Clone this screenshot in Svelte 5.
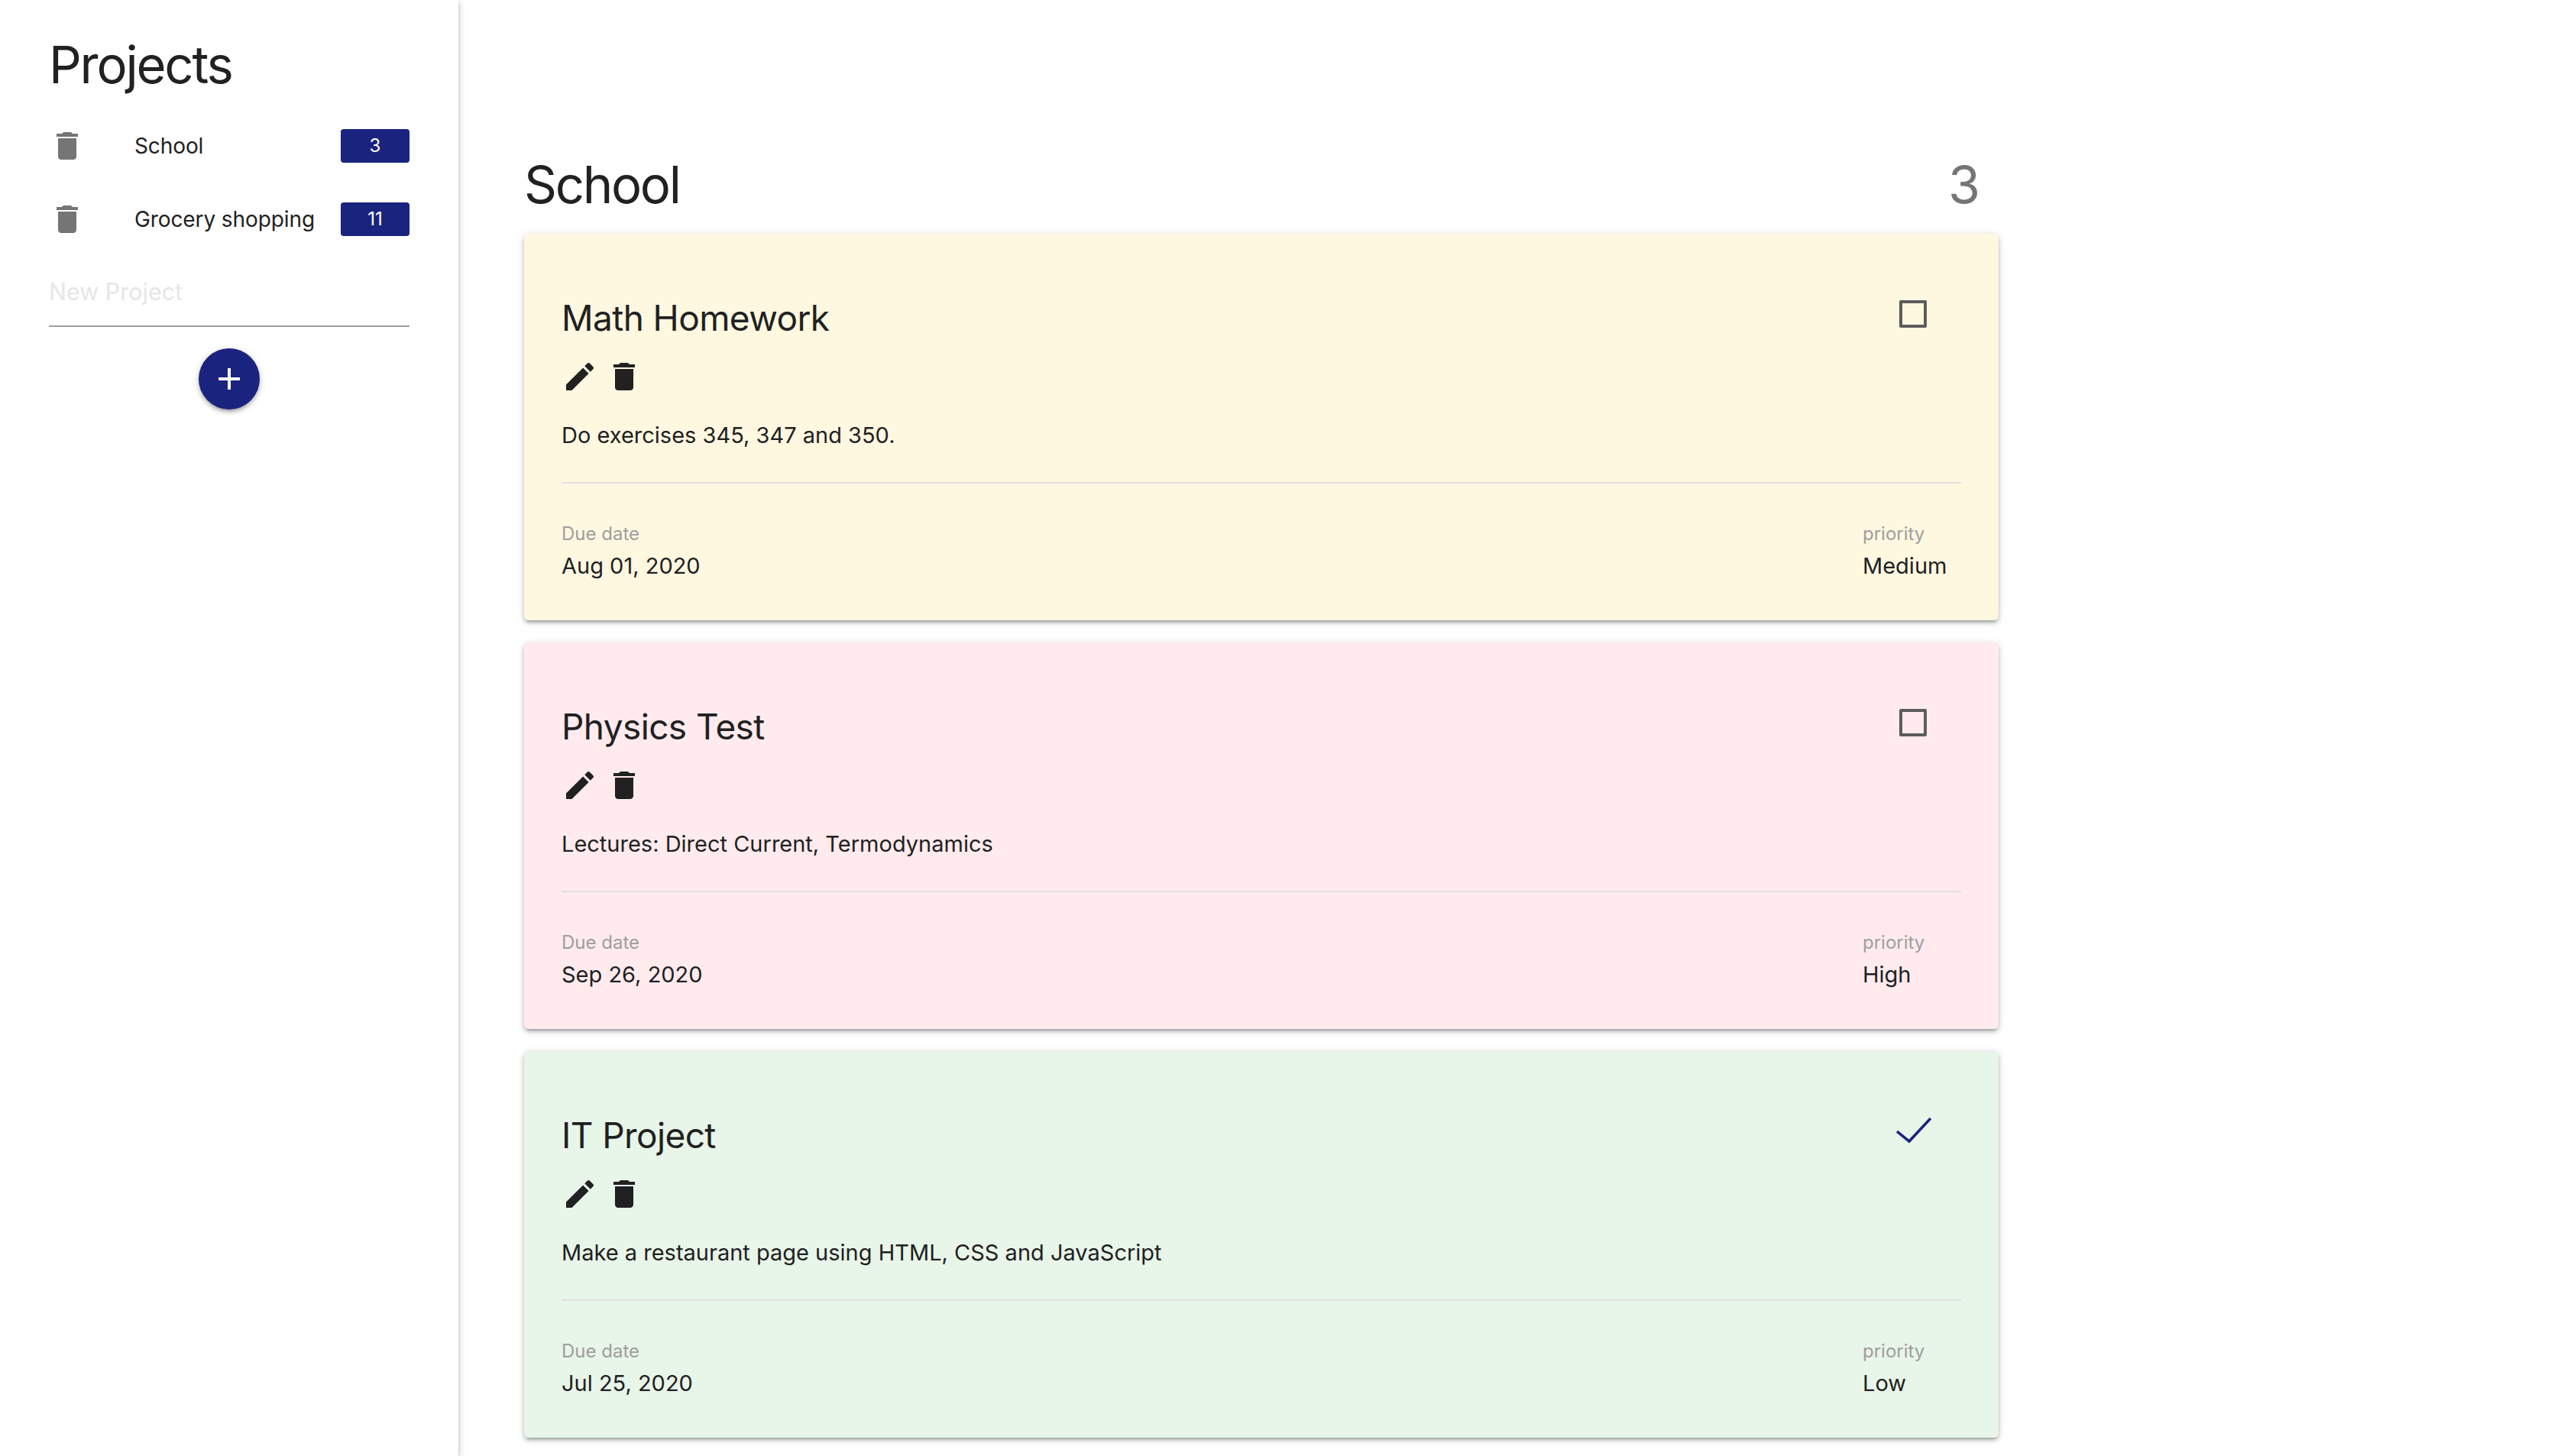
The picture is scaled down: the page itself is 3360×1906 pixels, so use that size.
<script>
	const projects = [
		{ name: 'School', count: 3 },
		{ name: 'Grocery shopping', count: 11 }
	];

	const todos = [
		{
			title: 'Math Homework',
			description: 'Do exercises 345, 347 and 350.',
			due: 'Aug 01, 2020',
			priority: 'Medium',
			done: false
		},
		{
			title: 'Physics Test',
			description: 'Lectures: Direct Current, Termodynamics',
			due: 'Sep 26, 2020',
			priority: 'High',
			done: false
		},
		{
			title: 'IT Project',
			description: 'Make a restaurant page using HTML, CSS and JavaScript',
			due: 'Jul 25, 2020',
			priority: 'Low',
			done: true
		}
	];

	const trash = 'M6 19c0 1.1.9 2 2 2h8c1.1 0 2-.9 2-2V7H6v12zM19 4h-3.5l-1-1h-5l-1 1H5v2h14V4z';
	const pencil =
		'M3 17.25V21h3.75L17.81 9.94l-3.75-3.75L3 17.25zM20.71 7.04c.39-.39.39-1.02 0-1.41l-2.34-2.34c-.39-.39-1.02-.39-1.41 0l-1.83 1.83 3.75 3.75 1.83-1.83z';
</script>

<div class="page">
	<aside class="sidebar">
		<h1>Projects</h1>
		{#each projects as project}
			<div class="project">
				<svg class="icon grey" viewBox="0 0 24 24"><path d={trash} /></svg>
				<span class="project-name">{project.name}</span>
				<span class="badge">{project.count}</span>
			</div>
		{/each}
		<div class="new-project">New Project</div>
		<button class="add" aria-label="Add project">
			<svg viewBox="0 0 24 24"><path d="M12 5v14M5 12h14" /></svg>
		</button>
	</aside>

	<main class="content">
		<header class="heading">
			<h2>School</h2>
			<span class="total">3</span>
		</header>

		{#each todos as todo}
			<article class="card {todo.priority.toLowerCase()}">
				<div class="card-top">
					<div>
						<h3>{todo.title}</h3>
						<div class="actions">
							<svg class="icon" viewBox="0 0 24 24"><path d={pencil} /></svg>
							<svg class="icon" viewBox="0 0 24 24"><path d={trash} /></svg>
						</div>
					</div>
					<div class="status">
						{#if todo.done}
							<svg class="check" viewBox="0 0 46 34"><path d="M1 18l16 13L45 1" /></svg>
						{:else}
							<span class="box"></span>
						{/if}
					</div>
				</div>
				<p>{todo.description}</p>
				<hr />
				<div class="card-bottom">
					<div>
						<div class="label">Due date</div>
						<div class="value">{todo.due}</div>
					</div>
					<div class="priority">
						<div class="label">priority</div>
						<div class="value">{todo.priority}</div>
					</div>
				</div>
			</article>
		{/each}
	</main>
</div>

<style>
	:global(body) {
		background: #fff;
		color: #212121;
		font-family: Inter, 'Noto Sans', sans-serif;
	}

	.page {
		display: flex;
		height: 1906px;
		overflow: hidden;
	}

	.sidebar {
		box-sizing: border-box;
		width: 600px;
		flex-shrink: 0;
		padding: 0 64px;
		box-shadow: 0 4px 4px rgba(0, 0, 0, 0.14), 0 6px 2px -4px rgba(0, 0, 0, 0.12), 0 2px 10px rgba(0, 0, 0, 0.2);
	}

	h1 {
		margin: 0;
		padding-top: 45px;
		height: 143px;
		box-sizing: border-box;
		font-size: 67px;
		line-height: 80px;
		font-weight: 400;
		letter-spacing: -2.2px;
	}

	.project {
		display: flex;
		align-items: center;
		height: 96px;
	}

	.icon {
		display: block;
		width: 48px;
		height: 48px;
		fill: #212121;
	}

	.icon.grey {
		fill: #757575;
	}

	.project-name {
		margin-left: 64px;
		flex: 1;
		font-size: 28px;
		letter-spacing: -0.1px;
	}

	.badge {
		width: 90px;
		height: 44px;
		border-radius: 4px;
		background: #1a237e;
		color: #fff;
		font-size: 24px;
		line-height: 44px;
		text-align: center;
	}

	.new-project {
		height: 92px;
		line-height: 92px;
		margin-top: 1px;
		box-sizing: border-box;
		border-bottom: 2px solid #9e9e9e;
		font-size: 30.5px;
		color: #e6e6e6;
	}

	.add {
		display: block;
		width: 80px;
		height: 80px;
		margin: 28px auto 0;
		padding: 16px;
		border: none;
		border-radius: 50%;
		background: #1a237e;
		box-shadow: 0 4px 4px rgba(0, 0, 0, 0.14), 0 6px 2px -4px rgba(0, 0, 0, 0.12), 0 2px 10px rgba(0, 0, 0, 0.2);
	}

	.add svg {
		display: block;
		fill: none;
		stroke: #fff;
		stroke-width: 2;
	}

	.content {
		width: 1930px;
		margin-left: 86px;
		padding-top: 188px;
	}

	.heading {
		display: flex;
		justify-content: space-between;
		align-items: center;
		height: 106px;
		margin-bottom: 12px;
		padding-right: 24px;
	}

	h2 {
		margin: 0;
		font-size: 67px;
		font-weight: 400;
		letter-spacing: -2.3px;
	}

	.total {
		font-size: 68px;
		color: #757575;
	}

	.card {
		box-sizing: border-box;
		height: 506px;
		margin-bottom: 29px;
		padding: 80px 49px 0;
		border-radius: 6px;
		box-shadow: 0 4px 4px rgba(0, 0, 0, 0.14), 0 6px 2px -4px rgba(0, 0, 0, 0.12), 0 2px 10px rgba(0, 0, 0, 0.2);
	}

	.medium {
		background: #fff8e1;
	}

	.high {
		background: #ffebee;
	}

	.low {
		background: #e8f5e9;
	}

	.card-top {
		display: flex;
		justify-content: space-between;
	}

	h3 {
		margin: 0;
		font-size: 46px;
		line-height: 60px;
		font-weight: 400;
		letter-spacing: -0.6px;
	}

	.actions {
		display: flex;
		gap: 10px;
		margin-top: 23px;
	}

	.status {
		width: 81px;
		padding-top: 7px;
	}

	.box {
		display: block;
		box-sizing: border-box;
		width: 36px;
		height: 36px;
		border: 4px solid #5c5c5c;
		border-radius: 2px;
	}

	.check {
		display: block;
		width: 46px;
		height: 34px;
		margin: 0 0 0 -4px;
		fill: none;
		stroke: #1a237e;
		stroke-width: 3.5;
	}

	p {
		margin: 31px 0 0;
		font-size: 29px;
		line-height: 44px;
	}

	hr {
		margin: 39px 0 0;
		border: none;
		border-top: 2px solid #e0e0e0;
	}

	.card-bottom {
		display: flex;
		justify-content: space-between;
		margin-top: 50px;
	}

	.priority {
		width: 129px;
	}

	.label {
		font-size: 24px;
		line-height: 32px;
		color: #9e9e9e;
	}

	.value {
		margin-top: 4px;
		font-size: 29px;
		line-height: 44px;
	}
</style>
